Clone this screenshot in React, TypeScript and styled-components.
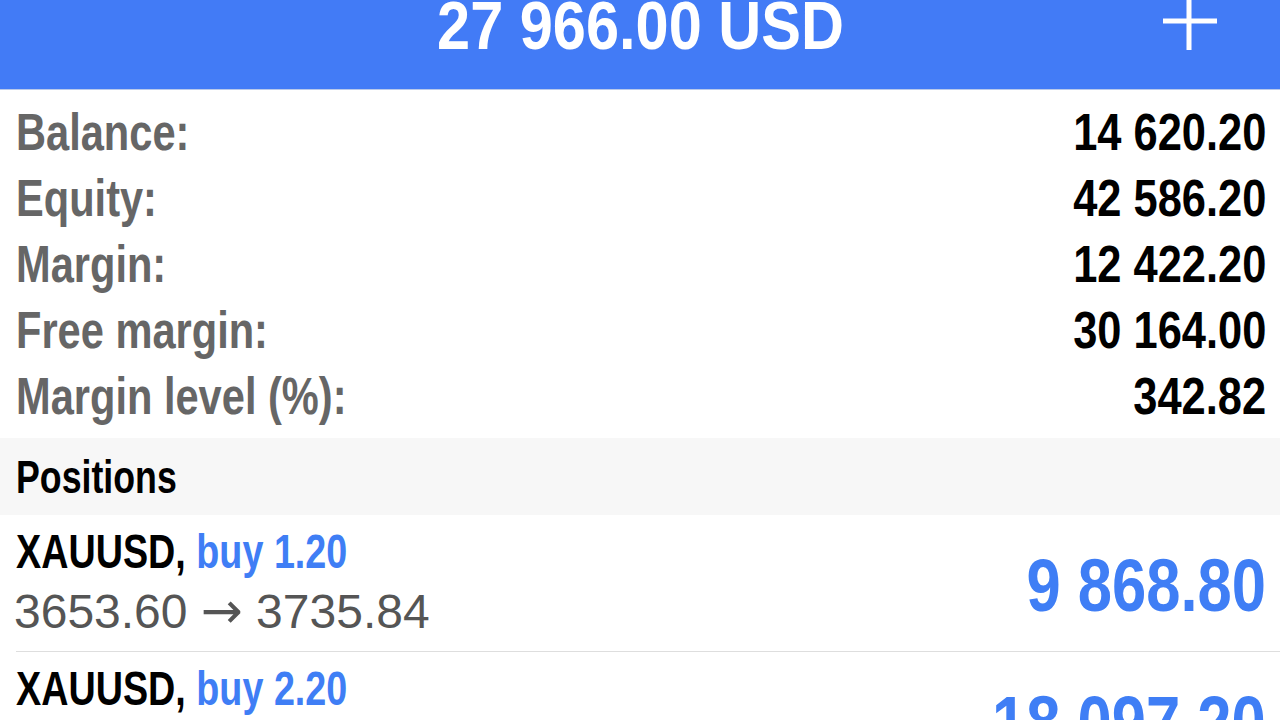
import React from "react";
import styled, { createGlobalStyle } from "styled-components";

const GlobalStyle = createGlobalStyle`
  html, body {
    margin: 0;
    padding: 0;
    background: #fff;
    overflow: hidden;
  }
  body {
    font-family: "Liberation Sans", Arial, sans-serif;
  }
`;

interface Summary {
  label: string;
  value: string;
}

interface Position {
  symbol: string;
  side: string;
  volume: string;
  openPrice: string;
  currentPrice: string;
  profit: string;
}

const summary: Summary[] = [
  { label: "Balance:", value: "14 620.20" },
  { label: "Equity:", value: "42 586.20" },
  { label: "Margin:", value: "12 422.20" },
  { label: "Free margin:", value: "30 164.00" },
  { label: "Margin level (%):", value: "342.82" },
];

const positions: Position[] = [
  { symbol: "XAUUSD", side: "buy", volume: "1.20", openPrice: "3653.60", currentPrice: "3735.84", profit: "9 868.80" },
  { symbol: "XAUUSD", side: "buy", volume: "2.20", openPrice: "3653.60", currentPrice: "3735.84", profit: "18 097.20" },
];

// condensed look of the app's font: no narrow face installed, so squeeze horizontally
const Squeeze = styled.span<{ $scale: number; $origin: "left" | "center" | "right" }>`
  display: inline-block;
  white-space: nowrap;
  transform: scaleX(${(p) => p.$scale});
  transform-origin: ${(p) => p.$origin} center;
`;

const Screen = styled.div`
  width: 1280px;
  height: 720px;
  overflow: hidden;
  background: #fff;
`;

const NavBar = styled.header`
  height: 89px;
  background: #427bf6;
  border-bottom: 1px solid #b9c9ea;
  display: grid;
  grid-template-columns: 1fr auto 1fr;
  align-items: start;
  overflow: hidden;
`;

const NavTitle = styled.h1`
  grid-column: 2;
  margin: -8px 0 0;
  font-weight: 700;
  font-size: 68px;
  line-height: 67px;
  color: #fff;
  white-space: nowrap;
  text-align: center;
`;

const AddButton = styled.button`
  grid-column: 3;
  justify-self: end;
  margin: -2px 62px 0 0;
  padding: 0;
  border: none;
  background: none;
  width: 56px;
  height: 54px;
  display: flex;
`;

const SummaryList = styled.section`
  padding: 9px 14px 9px 16px;
`;

const SummaryRow = styled.div`
  display: flex;
  justify-content: space-between;
  height: 66px;
  line-height: 66px;
  font-size: 52px;
  font-weight: 700;
`;

const SummaryLabel = styled.span`
  color: #666;
`;

const SummaryValue = styled.span`
  color: #000;
`;

const SectionHeader = styled.div`
  background: #f7f7f7;
  height: 77px;
  line-height: 77px;
  padding-left: 16px;
  font-size: 47px;
  font-weight: 700;
  color: #000;
`;

const PositionRow = styled.div`
  display: flex;
  justify-content: space-between;
  align-items: center;
  margin-left: 16px;
  padding: 6px 14px 9px 0;
  border-bottom: 1px solid #dedede;
`;

const PositionInfo = styled.div`
  display: flex;
  flex-direction: column;
`;

const PositionTitle = styled.div`
  font-size: 49px;
  line-height: 60px;
  font-weight: 700;
  color: #000;
  white-space: nowrap;
`;

const Side = styled.span`
  color: #3f7ef5;
`;

const Prices = styled.div`
  margin-left: -2px;
  font-size: 48px;
  line-height: 60px;
  color: #555;
  white-space: nowrap;
`;

const Arrow = styled.span`
  font-family: "DejaVu Sans", sans-serif;
  font-size: 50px;
`;

const Profit = styled.div`
  padding-top: 7px;
  font-size: 75px;
  line-height: 75px;
  font-weight: 700;
  color: #3f7ef5;
`;

export default function App() {
  return (
    <Screen>
      <GlobalStyle />
      <NavBar>
        <NavTitle>
          <Squeeze $scale={0.875} $origin="center">27 966.00 USD</Squeeze>
        </NavTitle>
        <AddButton aria-label="Add">
          <svg width="56" height="54" viewBox="0 0 56 54">
            <path d="M27 0V52M1 23H55" stroke="#fff" strokeWidth="5" fill="none" />
          </svg>
        </AddButton>
      </NavBar>
      <SummaryList>
        {summary.map((s) => (
          <SummaryRow key={s.label}>
            <SummaryLabel>
              <Squeeze $scale={0.8} $origin="left">{s.label}</Squeeze>
            </SummaryLabel>
            <SummaryValue>
              <Squeeze $scale={0.835} $origin="right">{s.value}</Squeeze>
            </SummaryValue>
          </SummaryRow>
        ))}
      </SummaryList>
      <SectionHeader>
        <Squeeze $scale={0.76} $origin="left">Positions</Squeeze>
      </SectionHeader>
      {positions.map((p, i) => (
        <PositionRow key={i}>
          <PositionInfo>
            <PositionTitle>
              <Squeeze $scale={0.77} $origin="left">
                {p.symbol}, <Side>{p.side} {p.volume}</Side>
              </Squeeze>
            </PositionTitle>
            <Prices>
              {p.openPrice} <Arrow>→</Arrow> {p.currentPrice}
            </Prices>
          </PositionInfo>
          <Profit>
            <Squeeze $scale={0.82} $origin="right">{p.profit}</Squeeze>
          </Profit>
        </PositionRow>
      ))}
    </Screen>
  );
}
